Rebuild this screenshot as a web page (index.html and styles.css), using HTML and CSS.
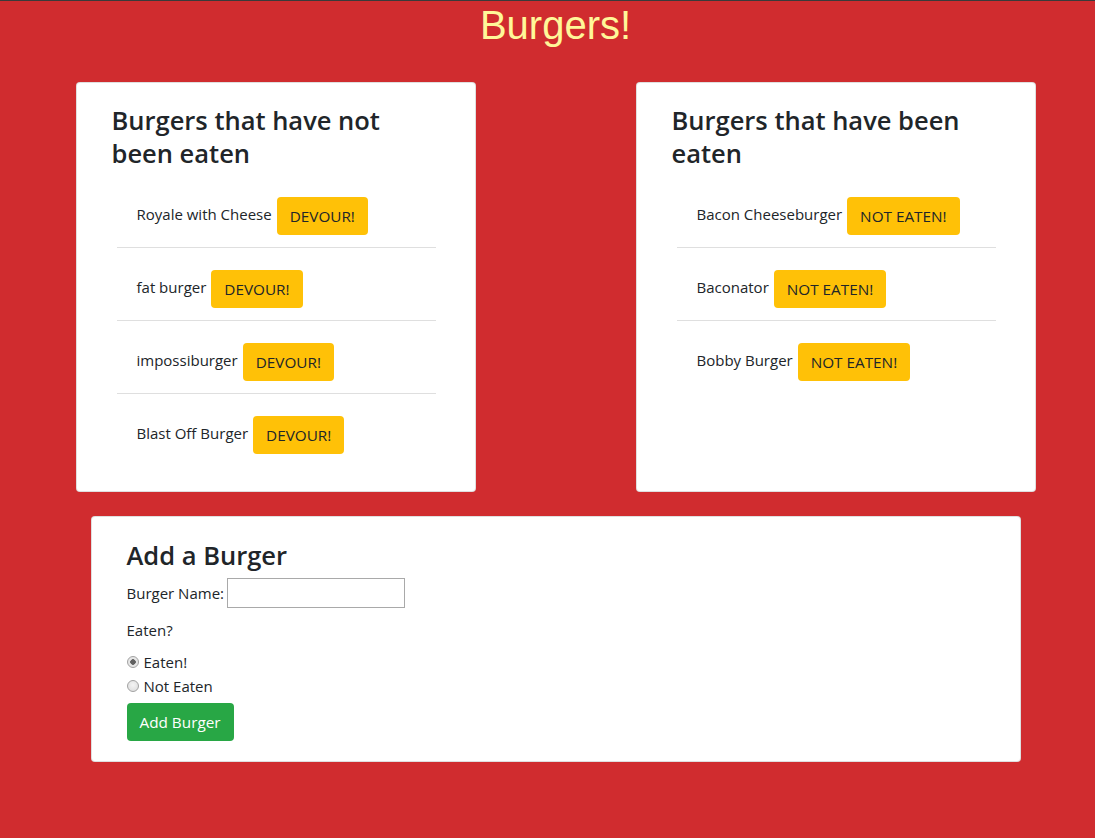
FILE: index.html
```html
<!DOCTYPE html>
<html lang="en">
<head>
<meta charset="utf-8">
<title>Burgers!</title>
<link rel="stylesheet" href="styles.css">
</head>
<body>
<div class="topbar"></div>
<div class="container">
  <h1 class="title">Burgers!</h1>
  <div class="row">
    <section class="card">
      <h3 class="card-title">Burgers that have not been eaten</h3>
      <ul class="list">
        <li class="item"><span class="name">Royale with Cheese</span><button class="btn btn-warn">DEVOUR!</button></li>
        <li class="item"><span class="name">fat burger</span><button class="btn btn-warn">DEVOUR!</button></li>
        <li class="item"><span class="name">impossiburger</span><button class="btn btn-warn">DEVOUR!</button></li>
        <li class="item"><span class="name">Blast Off Burger</span><button class="btn btn-warn">DEVOUR!</button></li>
      </ul>
    </section>
    <section class="card">
      <h3 class="card-title">Burgers that have been eaten</h3>
      <ul class="list">
        <li class="item"><span class="name">Bacon Cheeseburger</span><button class="btn btn-warn">NOT EATEN!</button></li>
        <li class="item"><span class="name">Baconator</span><button class="btn btn-warn">NOT EATEN!</button></li>
        <li class="item"><span class="name">Bobby Burger</span><button class="btn btn-warn">NOT EATEN!</button></li>
      </ul>
    </section>
  </div>
  <section class="card card-add">
    <h3 class="card-title">Add a Burger</h3>
    <form class="add-form">
      <div class="name-row">
        <label for="burger-name">Burger Name:</label>
        <input type="text" id="burger-name" class="text-input">
      </div>
      <p class="question">Eaten?</p>
      <div class="radios">
        <label class="radio-row"><input type="radio" name="eaten" class="radio" checked> Eaten!</label>
        <label class="radio-row"><input type="radio" name="eaten" class="radio"> Not Eaten</label>
      </div>
      <button type="button" class="btn btn-green">Add Burger</button>
    </form>
  </section>
</div>
</body>
</html>
```

FILE: styles.css
```css
* { box-sizing: border-box; }

html, body {
  margin: 0;
  padding: 0;
}

body {
  background: #d02c2f;
  color: #212529;
  font-family: "Open Sans", "Noto Sans", sans-serif;
  font-size: 15px;
  line-height: 24px;
  min-height: 838px;
}

.topbar {
  height: 1px;
  background: #3a3a3a;
}

.container {
  width: 960px;
  margin-left: 75.5px;
}

.title {
  margin: 0;
  font-family: "Liberation Sans", Arial, sans-serif;
  font-weight: normal;
  font-size: 40px;
  line-height: 48px;
  color: #fff799;
  text-align: center;
}

.row {
  display: flex;
  justify-content: space-between;
  margin-top: 33px;
}

.card {
  width: 400px;
  background: #fff;
  border: 1px solid rgba(0, 0, 0, 0.125);
  border-radius: 4px;
  padding: 21px 35px 25px;
}

.card-title {
  margin: 0 0 5px;
  font-size: 25.5px;
  line-height: 33px;
  font-weight: 600;
  color: #212529;
}

.list {
  list-style: none;
  margin: 0 4px 0 5px;
  padding: 0;
}

.item {
  display: flex;
  align-items: center;
  gap: 5px;
  padding: 22px 20px 12px;
  border-bottom: 1px solid #dfdfdf;
}

.item:last-child {
  border-bottom: none;
}

.name {
  margin-bottom: 4px;
}

.btn {
  font-family: inherit;
  font-size: 15.3px;
  line-height: 24px;
  padding: 6px 12px;
  border: 1px solid transparent;
  border-radius: 4px;
  cursor: pointer;
}

.btn-warn {
  background: #ffc107;
  color: #212529;
}

.btn-green {
  background: #28a745;
  color: #fff;
  margin-top: 5px;
}

.card-add {
  width: 930px;
  margin: 24px 0 0 15px;
  padding-top: 22px;
  padding-bottom: 20px;
}

.card-add .card-title {
  margin-bottom: 6px;
}

.name-row {
  display: flex;
  align-items: center;
  gap: 3px;
}

.text-input {
  width: 178px;
  height: 30px;
  border: 1px solid #a9a9a9;
  padding: 2px 3px;
  font-family: inherit;
  font-size: 15px;
}

.question {
  margin: 10px 0 8px;
}

.radios {
  display: flex;
  flex-direction: column;
}

.radio-row {
  display: flex;
  align-items: center;
  gap: 5px;
}

.radio {
  appearance: none;
  -webkit-appearance: none;
  width: 12px;
  height: 12px;
  margin: 0;
  border: 1px solid #a2a2a2;
  border-radius: 50%;
  background: radial-gradient(circle at 50% 40%, #f4f4f4 0%, #dadada 100%);
}

.radio:checked {
  background: radial-gradient(circle, #606060 0 2.5px, #e6e6e6 3px 100%);
}
```
